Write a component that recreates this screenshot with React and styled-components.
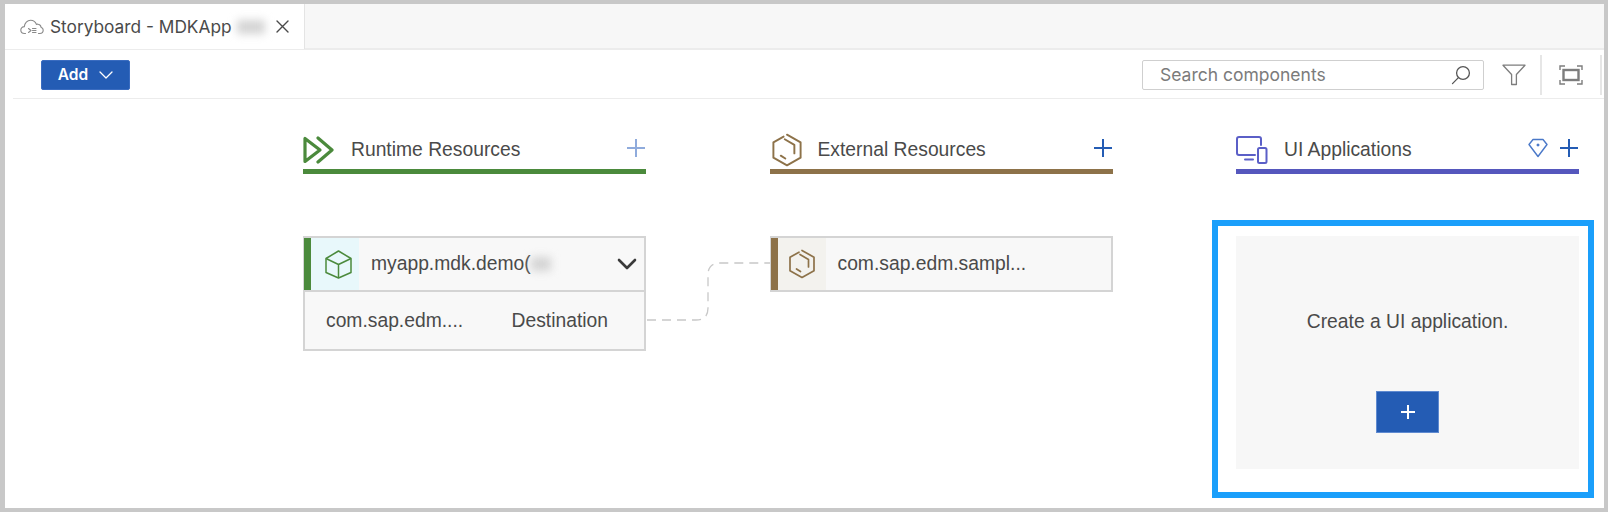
import React from 'react'
import styled, { createGlobalStyle } from 'styled-components'

const GlobalStyle = createGlobalStyle`
  html, body {
    margin: 0;
    padding: 0;
    background: #fff;
  }
`
const Frame = styled.div`
  position: relative;
  box-sizing: border-box;
  width: 1608px;
  height: 512px;
  border: 4px solid #c8c8c8;
  border-left-width: 5px;
  background: #fff;
  color: #3f3f3f;
  font-family: "Liberation Sans", Arial, sans-serif;
  overflow: hidden;
`
const TabBar = styled.div`
  display: flex;
  height: 44px;
  background: #f7f7f7;
  border-bottom: 2px solid #ececec;
`
const Tab = styled.div`
  display: flex;
  align-items: center;
  box-sizing: border-box;
  width: 300px;
  height: 45px;
  padding-left: 15px;
  background: #fff;
  border-right: 1px solid #e4e4e4;
  font-family: Inter, "Liberation Sans", sans-serif;
  font-size: 17.3px;
  color: #4a4a4a;
`
const TabTitle = styled.span`
  margin-left: 6px;
  white-space: nowrap;
`
const Smudge = styled.span`
  display: inline-block;
  width: ${p => p.$w}px;
  height: ${p => p.$h}px;
  margin-left: ${p => p.$ml || 0}px;
  background: #d4d4d4;
  filter: blur(4px);
`
const TabClose = styled.button`
  display: flex;
  margin-left: ${p => p.$ml}px;
  padding: 0;
  border: 0;
  background: none;
  color: #4a4a4a;
`
const Toolbar = styled.div`
  display: flex;
  align-items: center;
  box-sizing: border-box;
  height: 49px;
  margin-left: 8px;
  padding: 1px 2px 0 28px;
  border-bottom: 1px solid #ececec;
`
const AddButton = styled.button`
  display: flex;
  align-items: center;
  justify-content: center;
  gap: 11px;
  box-sizing: border-box;
  width: 89px;
  height: 30px;
  padding: 0;
  border: 1px solid #3a6cc0;
  border-radius: 2px;
  background: #245cb4;
  color: #fff;
  font-family: Inter, "Liberation Sans", sans-serif;
  font-size: 15.5px;
  font-weight: 600;
`
const Tools = styled.div`
  display: flex;
  align-items: center;
  margin-left: auto;
`
const SearchBox = styled.div`
  display: flex;
  align-items: center;
  justify-content: space-between;
  box-sizing: border-box;
  width: 342px;
  height: 30px;
  padding: 0 12px 0 17px;
  border: 1px solid #cfcfcf;
  border-radius: 2px;
  font-family: Inter, "Liberation Sans", sans-serif;
  font-size: 17.5px;
  color: #7b7b7b;
`
const ToolSlot = styled.div`
  display: flex;
  align-items: center;
  justify-content: center;
  box-sizing: border-box;
  width: ${p => p.$w}px;
  height: 40px;
  padding-left: ${p => p.$pl || 0}px;
  border-right: ${p => (p.$divider ? '2px solid #e6e6e6' : '0')};
  color: #7d7d7d;
`
const Board = styled.div`
  display: grid;
  grid-template-columns: repeat(3, 343px);
  column-gap: 123.5px;
  margin-left: 298px;
  padding-top: 35px;
`
const Column = styled.section`
  display: flex;
  flex-direction: column;
`
const ColumnHeader = styled.header`
  display: flex;
  align-items: center;
  box-sizing: border-box;
  height: 40px;
  padding-bottom: 4px;
  border-bottom: 5px solid ${p => p.$color};
`
const HeaderIcon = styled.span`
  display: flex;
  width: ${p => p.$w}px;
  flex-shrink: 0;
`
const ColumnTitle = styled.h2`
  flex: 1;
  margin: 0;
  padding-top: 1px;
  font-size: 19.3px;
  font-weight: 400;
  color: #4a4a4a;
`
const HeaderActions = styled.div`
  display: flex;
  align-items: center;
  gap: 12px;
  margin: 0 1px 3px 0;
`
const PlusMark = styled.span`
  display: flex;
  color: ${p => (p.$muted ? '#8fabdc' : '#245cb4')};
`
const ColumnBody = styled.div`
  padding-top: 62px;
`
const Card = styled.article`
  border: 2px solid #d4d4d4;
  background: #f8f8f8;
`
const CardHead = styled.div`
  display: flex;
  align-items: center;
  height: 52px;
  border-left: 7px solid ${p => p.$accent};
  margin-left: -1px;
  font-size: 19.3px;
  color: #4a4a4a;
`
const CardIcon = styled.span`
  display: flex;
  align-items: center;
  justify-content: center;
  align-self: stretch;
  box-sizing: border-box;
  width: 48px;
  padding-left: ${p => p.$pl || 0}px;
  flex-shrink: 0;
  background: ${p => p.$bg};
`
const CardTitle = styled.span`
  display: flex;
  align-items: center;
  flex: 1;
  margin-left: 12px;
  white-space: nowrap;
`
const Chevron = styled.span`
  display: flex;
  margin-right: 7px;
  color: #3a3a3a;
`
const CardRow = styled.div`
  display: flex;
  justify-content: space-between;
  align-items: center;
  height: 57px;
  padding: 0 36px 0 21px;
  border-top: 2px solid #d4d4d4;
  font-size: 19.3px;
  color: #4a4a4a;
`
const Highlight = styled.div`
  margin: -16px -15px 0 -24px;
  padding: 10px 9px 23px 18px;
  border: 6px solid #1a9ffb;
`
const EmptyPanel = styled.div`
  display: flex;
  flex-direction: column;
  align-items: center;
  box-sizing: border-box;
  height: 233px;
  padding-top: 75px;
  background: #f7f7f7;
  font-size: 19.3px;
  color: #4a4a4a;
`
const CreateButton = styled.button`
  display: flex;
  align-items: center;
  justify-content: center;
  width: 63px;
  height: 42px;
  margin-top: 58px;
  padding: 0;
  border: 1px solid #5f8ad0;
  background: #245cb4;
  color: #fff;
`
const Connector = styled.svg`
  position: absolute;
  left: 0;
  top: 0;
  pointer-events: none;
`

const CloudIcon = () => (
  <svg width="24" height="16" viewBox="0 0 24 16" fill="none" stroke="#8a8a8a" strokeWidth="1.1" strokeLinecap="round" strokeLinejoin="round">
    <path d="M5.5 14.5 H4.5 C2 14.5 .8 12.8 .8 11 C.8 9 2.4 7.6 4.3 7.6 C4.6 4 7.2 1.2 10.6 1.2 C13.4 1.2 15.6 3 16.4 5.4 C17 5.1 17.6 5 18.2 5.2 C20 5.6 21 7 21 8.3 C22.4 8.8 23.2 9.8 23.2 11.1 C23.2 12.9 21.8 14.5 19.8 14.5 H18.5" />
    <path d="M8.5 9.5 L11 11.5 L8.5 13.5 M12.5 9.5 H16 M12.5 11.5 H16 M12.5 13.5 H16" />
  </svg>
)

const CloseIcon = () => (
  <svg width="13" height="13" viewBox="0 0 13 13" stroke="currentColor" strokeWidth="1.4" strokeLinecap="round">
    <path d="M1 1 L12 12 M12 1 L1 12" />
  </svg>
)

const CaretIcon = () => (
  <svg width="14" height="8" viewBox="0 0 14 8" fill="none" stroke="currentColor" strokeWidth="1.3" strokeLinecap="round" strokeLinejoin="round">
    <path d="M1 1 L7 7 L13 1" />
  </svg>
)

const SearchIcon = () => (
  <svg width="20" height="20" viewBox="0 0 20 20" fill="none" stroke="#555" strokeWidth="1.3" strokeLinecap="round">
    <circle cx="12" cy="8" r="6.4" />
    <path d="M7.4 12.6 L1.5 18.6" />
  </svg>
)

const FilterIcon = () => (
  <svg width="24" height="22" viewBox="0 0 24 22" fill="none" stroke="currentColor" strokeWidth="1.3" strokeLinejoin="round">
    <path d="M1 1.2 H23 L14.4 10.5 V20.5 H9.6 V10.5 Z" />
  </svg>
)

const FitIcon = () => (
  <svg width="24" height="20" viewBox="0 0 24 20" fill="none" stroke="currentColor" strokeWidth="1.4">
    <path d="M1 5 V1 H6 M18 1 H23 V5 M23 15 V19 H18 M6 19 H1 V15" />
    <rect x="4.5" y="5" width="15" height="10" strokeWidth="2.4" />
  </svg>
)

const RuntimeIcon = () => (
  <svg width="31" height="28" viewBox="0 0 31 28" fill="none" stroke="#4b8a3c" strokeWidth="3.2" strokeLinecap="round" strokeLinejoin="round">
    <path d="M2 2.5 V25.5 L17 14 Z" />
    <path d="M15 2 L29 14 L15 26" />
  </svg>
)

const HexIcon = ({ size }) => (
  <svg width={size} height={size} viewBox="0 0 30 30" fill="none" stroke="#8d7249" strokeWidth="1.7" strokeLinecap="round" strokeLinejoin="round">
    <path d="M12 3.2 L3 8.2 V21.8 L15 28.5 L27 21.8 V8.2 L15 1.5" />
    <path d="M13 5.5 L21.5 10.5 V18" />
    <path d="M9.5 20 L13.5 22.5" />
  </svg>
)

const DevicesIcon = () => (
  <svg width="32" height="28" viewBox="0 0 32 28" fill="none" stroke="#5b5fc7" strokeWidth="2" strokeLinecap="round" strokeLinejoin="round">
    <path d="M19 19 H3 A2 2 0 0 1 1 17 V3 A2 2 0 0 1 3 1 H23 A2 2 0 0 1 25 3 V9" />
    <path d="M9 23.5 H17" />
    <rect x="22" y="12" width="8.5" height="15" rx="1.5" />
  </svg>
)

const GemIcon = () => (
  <svg width="20" height="20" viewBox="0 0 20 20" fill="none" stroke="#4a78c8" strokeWidth="1.4" strokeLinejoin="round">
    <path d="M5 1.5 H15 L19 6.5 L10 18.5 L1 6.5 Z" />
    <path d="M10 5.2 L11.8 7 L10 8.8 L8.2 7 Z" fill="#4a78c8" stroke="none" />
  </svg>
)

const PlusIcon = ({ size = 18, weight = 2 }) => (
  <svg width={size} height={size} viewBox="0 0 18 18" stroke="currentColor" strokeWidth={weight}>
    <path d="M9 0 V18 M0 9 H18" />
  </svg>
)

const CubeIcon = () => (
  <svg width="29" height="29" viewBox="0 0 29 29" fill="none" stroke="#4b8a3c" strokeWidth="1.5" strokeLinejoin="round">
    <path d="M14.5 1 L27 8.5 V22.5 L14.5 28 L2 22.5 V8.5 Z" />
    <path d="M2 8.5 L14.5 14.5 L27 8.5 M14.5 14.5 V28" />
  </svg>
)

const BigChevron = () => (
  <svg width="20" height="12" viewBox="0 0 20 12" fill="none" stroke="currentColor" strokeWidth="2.6" strokeLinecap="round" strokeLinejoin="round">
    <path d="M2 2 L10 10 L18 2" />
  </svg>
)

export default function App() {
  return (
    <Frame>
      <GlobalStyle />
      <TabBar>
        <Tab>
          <CloudIcon />
          <TabTitle>Storyboard - MDKApp</TabTitle>
          <Smudge $w={28} $h={14} $ml={5} />
          <TabClose $ml={11}><CloseIcon /></TabClose>
        </Tab>
      </TabBar>
      <Toolbar>
        <AddButton>Add <CaretIcon /></AddButton>
        <Tools>
          <SearchBox>Search components <SearchIcon /></SearchBox>
          <ToolSlot $w={58} $pl={4} $divider><FilterIcon /></ToolSlot>
          <ToolSlot $w={60} $divider><FitIcon /></ToolSlot>
        </Tools>
      </Toolbar>
      <Board>
        <Column>
          <ColumnHeader $color="#4b8a3c">
            <HeaderIcon $w={48}><RuntimeIcon /></HeaderIcon>
            <ColumnTitle>Runtime Resources</ColumnTitle>
            <HeaderActions><PlusMark $muted><PlusIcon /></PlusMark></HeaderActions>
          </ColumnHeader>
          <ColumnBody>
            <Card>
              <CardHead $accent="#4b8a3c">
                <CardIcon $bg="#e8f8fb" $pl={6}><CubeIcon /></CardIcon>
                <CardTitle>myapp.mdk.demo(<Smudge $w={20} $h={14} /></CardTitle>
                <Chevron><BigChevron /></Chevron>
              </CardHead>
              <CardRow>
                <span>com.sap.edm....</span>
                <span>Destination</span>
              </CardRow>
            </Card>
          </ColumnBody>
        </Column>
        <Column>
          <ColumnHeader $color="#8d7249">
            <HeaderIcon $w={48}><HexIcon size={34} /></HeaderIcon>
            <ColumnTitle>External Resources</ColumnTitle>
            <HeaderActions><PlusMark><PlusIcon /></PlusMark></HeaderActions>
          </ColumnHeader>
          <ColumnBody>
            <Card>
              <CardHead $accent="#8d7249">
                <CardIcon $bg="#f3f2ee"><HexIcon size={30} /></CardIcon>
                <CardTitle>com.sap.edm.sampl...</CardTitle>
              </CardHead>
            </Card>
          </ColumnBody>
        </Column>
        <Column>
          <ColumnHeader $color="#5557bd">
            <HeaderIcon $w={48}><DevicesIcon /></HeaderIcon>
            <ColumnTitle>UI Applications</ColumnTitle>
            <HeaderActions>
              <GemIcon />
              <PlusMark><PlusIcon /></PlusMark>
            </HeaderActions>
          </ColumnHeader>
          <ColumnBody>
            <Highlight>
              <EmptyPanel>
                Create a UI application.
                <CreateButton><PlusIcon size={14} weight={2.6} /></CreateButton>
              </EmptyPanel>
            </Highlight>
          </ColumnBody>
        </Column>
      </Board>
      <Connector width="1600" height="504" fill="none" stroke="#c8c8c8" strokeWidth="1.3" strokeDasharray="9 6">
        <path d="M642 316 H691 Q703 316 703 304 V271 Q703 259 715 259 H765" />
      </Connector>
    </Frame>
  )
}
